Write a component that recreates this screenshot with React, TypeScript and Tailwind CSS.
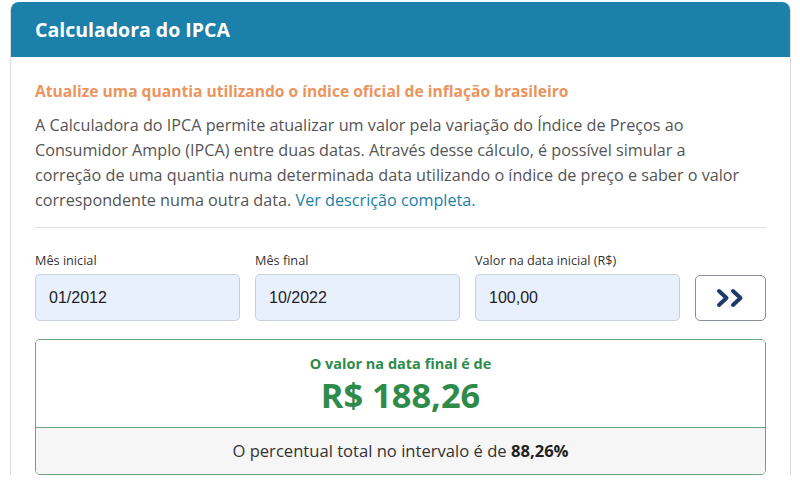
import { useState } from 'react';

const font = { fontFamily: '"Open Sans", "Noto Sans", sans-serif' };

function Field({ label, value }: { label: string; value: string }) {
  return (
    <div className="flex w-[205px] flex-col">
      <label className="mb-[5px] text-[12.7px] leading-[18px] text-[#333]">{label}</label>
      <div
        className="flex h-[47px] items-center rounded-[5px] border border-[#c9cfd8] bg-[#e8f0fe] px-[13px] text-[16px] text-[#222]"
        style={{ fontFamily: '"Liberation Sans", Arial, sans-serif' }}
      >
        {value}
      </div>
    </div>
  );
}

export default function App() {
  const [inicial] = useState('01/2012');
  const [final] = useState('10/2022');
  const [valor] = useState('100,00');

  return (
    <div className="h-[480px] w-[800px] overflow-hidden bg-white pt-[2px]" style={font}>
      <div className="ml-[10px] w-[781px] rounded-t-[8px] border-x border-[#dcdcdc]">
        <div className="flex h-[55px] items-center rounded-t-[8px] bg-[#1b80aa] px-[24px] pt-[1px]">
          <h1 className="text-[19.5px] font-bold text-white">Calculadora do IPCA</h1>
        </div>

        <div className="px-[24px] pt-[23px]">
          <h2 className="text-[15.6px] font-bold leading-[22px] text-[#e9955d]">
            Atualize uma quantia utilizando o índice oficial de inflação brasileiro
          </h2>
          <p className="mt-[11px] w-[718px] text-[16.2px] leading-[25px] text-[#555]">
            A Calculadora do IPCA permite atualizar um valor pela variação do Índice de Preços ao
            Consumidor Amplo (IPCA) entre duas datas. Através desse cálculo, é possível simular a
            correção de uma quantia numa determinada data utilizando o índice de preço e saber o valor
            correspondente numa outra data.{' '}
            <a href="#" className="text-[#1b7fa6]">Ver descrição completa.</a>
          </p>

          <hr className="mt-[14px] border-[#dedede]" />

          <div className="mt-[23px] flex items-end gap-[15px]">
            <Field label="Mês inicial" value={inicial} />
            <Field label="Mês final" value={final} />
            <Field label="Valor na data inicial (R$)" value={valor} />
            <button className="flex h-[46px] w-[71px] items-center justify-center rounded-[5px] border border-[#8a9099] bg-white">
              <svg width="32" height="20" viewBox="0 0 32 20" fill="none" stroke="#1d3a6b" strokeWidth="4" strokeLinecap="round" strokeLinejoin="round">
                <path d="M4 3 L11.5 10 L4 17" />
                <path d="M18 3 L25.5 10 L18 17" />
              </svg>
            </button>
          </div>

          <div className="mt-[18px] overflow-hidden rounded-[5px] border border-[#6aa57c]">
            <div className="flex h-[87px] flex-col items-center justify-center bg-white pt-[2px]">
              <span className="text-[14.5px] font-bold leading-[20px] text-[#2e8b4a]">O valor na data final é de</span>
              <span className="text-[34.4px] font-bold leading-[42px] text-[#2e8b4a]">R$ 188,26</span>
            </div>
            <div className="flex h-[47px] items-center justify-center border-t border-[#6aa57c] bg-[#f6f6f6] text-[16.6px] text-[#333]">
              O percentual total no intervalo é de&nbsp;<b className="text-[#222]">88,26%</b>
            </div>
          </div>
        </div>
      </div>
    </div>
  );
}
